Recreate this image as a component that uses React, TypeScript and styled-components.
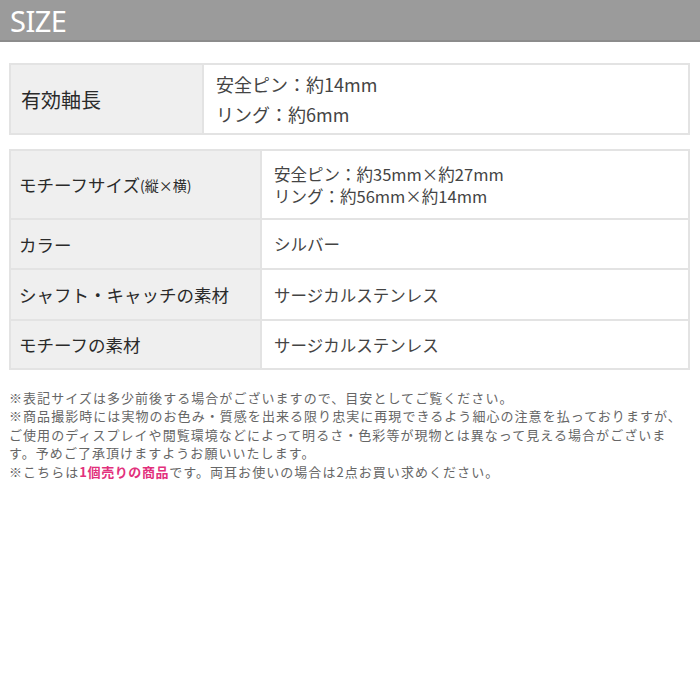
import React from 'react';
import styled, { createGlobalStyle } from 'styled-components';

const GlobalStyle = createGlobalStyle`
  html, body {
    margin: 0;
    padding: 0;
    background: #ffffff;
  }
  body {
    font-family: "Noto Sans CJK JP", "Noto Sans", sans-serif;
    color: #333;
  }
`;

const Page = styled.div`
  width: 700px;
  height: 700px;
  background: #fff;
  overflow: hidden;
`;

const Header = styled.div`
  height: 40px;
  background: #9b9b9b;
  border-bottom: 2px solid #8c8c8c;
  display: flex;
  align-items: center;
  padding-left: 10px;
`;

const HeaderTitle = styled.h1`
  margin: 0;
  font-family: "Noto Sans", "Open Sans", sans-serif;
  font-weight: 400;
  font-size: 29px;
  color: #fff;
  letter-spacing: -0.5px;
`;

const Table = styled.div<{ $top: number; $labelWidth: number }>`
  margin: ${p => p.$top}px 10px 0 9px;
  border: 2px solid #e3e3e3;
  display: grid;
  grid-template-columns: ${p => p.$labelWidth}px 1fr;
`;

const LabelCell = styled.div<{ $height: number; $size: number; $last?: boolean }>`
  height: ${p => p.$height}px;
  background: #efefef;
  border-right: 2px solid #e3e3e3;
  border-bottom: ${p => (p.$last ? 'none' : '2px solid #e3e3e3')};
  display: flex;
  align-items: center;
  padding-left: ${p => (p.$size > 18 ? 10 : 8)}px;
  font-size: ${p => p.$size}px;
  color: #2a2a2a;
  white-space: nowrap;
`;

const ValueCell = styled.div<{ $size: number; $lineHeight: number; $last?: boolean }>`
  background: #fff;
  border-bottom: ${p => (p.$last ? 'none' : '2px solid #e3e3e3')};
  display: flex;
  flex-direction: column;
  justify-content: center;
  padding-left: 12px;
  font-size: ${p => p.$size}px;
  line-height: ${p => p.$lineHeight}px;
  color: #444;
  white-space: nowrap;
`;

const Small = styled.span`
  font-size: 14px;
`;

const Notes = styled.div`
  margin: 19px 0 0 9px;
  font-size: 13px;
  line-height: 18.4px;
  letter-spacing: 1.05px;
  color: #666;
  white-space: nowrap;
`;

const Accent = styled.span`
  color: #e2307c;
  font-weight: 700;
  letter-spacing: 0.6px;
`;

interface Row {
  label: React.ReactNode;
  value: React.ReactNode;
  height: number;
}

const detailRows: Row[] = [
  {
    label: <>モチーフサイズ<Small>(縦×横)</Small></>,
    value: (
      <>
        <div>安全ピン：約35mm×約27mm</div>
        <div>リング：約56mm×約14mm</div>
      </>
    ),
    height: 67,
  },
  { label: 'カラー', value: 'シルバー', height: 48 },
  { label: 'シャフト・キャッチの素材', value: 'サージカルステンレス', height: 49 },
  { label: 'モチーフの素材', value: 'サージカルステンレス', height: 47 },
];

const App: React.FC = () => {
  return (
    <Page>
      <GlobalStyle />
      <Header>
        <HeaderTitle>SIZE</HeaderTitle>
      </Header>

      <Table $top={21} $labelWidth={193}>
        <LabelCell $height={68} $size={20} $last>有効軸長</LabelCell>
        <ValueCell $size={18} $lineHeight={30} $last>
          <div>安全ピン：約14mm</div>
          <div>リング：約6mm</div>
        </ValueCell>
      </Table>

      <Table $top={14} $labelWidth={251}>
        {detailRows.map((row, i) => {
          const last = i === detailRows.length - 1;
          return (
            <React.Fragment key={i}>
              <LabelCell $height={row.height} $size={17.5} $last={last}>{row.label}</LabelCell>
              <ValueCell $size={16.5} $lineHeight={22} $last={last}>{row.value}</ValueCell>
            </React.Fragment>
          );
        })}
      </Table>

      <Notes>
        ※表記サイズは多少前後する場合がございますので、目安としてご覧ください。<br />
        ※商品撮影時には実物のお色み・質感を出来る限り忠実に再現できるよう細心の注意を払っておりますが、<br />
        ご使用のディスプレイや閲覧環境などによって明るさ・色彩等が現物とは異なって見える場合がございま<br />
        す。予めご了承頂けますようお願いいたします。<br />
        ※こちらは<Accent>1個売りの商品</Accent>です。両耳お使いの場合は2点お買い求めください。
      </Notes>
    </Page>
  );
};

export default App;
